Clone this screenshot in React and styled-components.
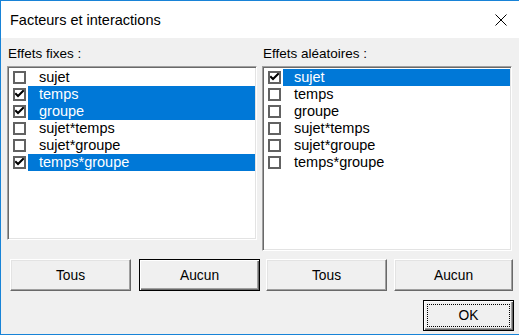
import React from "react";
import styled, { createGlobalStyle } from "styled-components";

const Global = createGlobalStyle`
  html, body { margin: 0; padding: 0; background: #f0f0f0; }
  * { box-sizing: border-box; }
`;

const Window = styled.div`
  width: 519px;
  height: 335px;
  background: #f0f0f0;
  border-top: 1px solid #1883d7;
  border-left: 1px solid #1883d7;
  border-bottom: 1px solid #1883d7;
  display: flex;
  flex-direction: column;
  font-family: "Liberation Sans", Arial, sans-serif;
  color: #000;
`;

const TitleBar = styled.div`
  height: 37px;
  background: #fff;
  display: flex;
  align-items: center;
  justify-content: space-between;
  padding: 0 12px 0 9px;
  flex-shrink: 0;
`;

const Title = styled.div`
  font-size: 14.5px;
  margin-top: 1px;
`;

const Close = styled.svg`
  width: 12px;
  height: 12px;
  display: block;
  margin-top: 1px;
`;

const Body = styled.div`
  display: flex;
  flex-direction: column;
  padding: 8px 0 0 6px;
`;

const Columns = styled.div`
  display: grid;
  grid-template-columns: 250px 250px;
  column-gap: 5px;
  align-items: start;
  height: 213px;
`;

const Column = styled.div`
  display: flex;
  flex-direction: column;
`;

const Label = styled.div`
  font-size: 13.5px;
  height: 20px;
  line-height: 16px;
  padding-left: 1px;
`;

const ListBox = styled.div`
  height: ${(p) => p.$h}px;
  background: #fff;
  border-style: solid;
  border-width: 1px;
  border-color: #a0a0a0 #fff #fff #a0a0a0;
  box-shadow: inset 1px 1px 0 #696969, inset -1px -1px 0 #e3e3e3;
  padding: 2px 1px 1px 2px;
  display: flex;
  flex-direction: column;
`;

const Row = styled.div`
  height: 17px;
  display: flex;
  align-items: stretch;
`;

const CheckCell = styled.div`
  width: 18px;
  flex-shrink: 0;
  display: flex;
  align-items: center;
  padding-left: 3px;
`;

const Box = styled.div`
  width: 13px;
  height: 13px;
  border: 2px solid #626262;
  background: #fff;
  display: flex;
  align-items: center;
  justify-content: center;
`;

const ItemText = styled.div`
  flex: 1;
  font-size: 14.5px;
  line-height: 17px;
  padding-left: 11px;
  background: ${(p) => (p.$sel ? "#0078d7" : "transparent")};
  color: ${(p) => (p.$sel ? "#fff" : "#000")};
  white-space: nowrap;
`;

const ButtonRow = styled.div`
  display: flex;
  padding-left: 3px;
  margin-top: 0px;
`;

const Button = styled.div`
  width: ${(p) => p.$w}px;
  height: 32px;
  margin-left: ${(p) => p.$ml}px;
  display: flex;
  align-items: center;
  justify-content: center;
  font-size: 13.8px;
  background: #f0f0f0;
  border: 1px solid;
  border-color: ${(p) => (p.$def ? "#000" : "#fff #696969 #696969 #fff")};
  box-shadow: ${(p) =>
    p.$def
      ? "inset 1px 1px 0 #fff, inset -1px -1px 0 #696969, inset -2px -2px 0 #a0a0a0"
      : "inset -1px -1px 0 #a0a0a0, inset 1px 1px 0 #e3e3e3"};
  position: relative;
`;

const Focus = styled.div`
  position: absolute;
  inset: 3px;
  border: 1px dotted #000;
  display: flex;
  align-items: center;
  justify-content: center;
`;

const Footer = styled.div`
  display: flex;
  justify-content: flex-end;
  padding-right: 5px;
  margin-top: 9px;
`;

const OkButton = styled(Button)`
  height: 31px;
`;

const Check = () => (
  <svg width="9" height="9" viewBox="0 0 9 9">
    <path d="M1 4 L3 6 L8 1" stroke="#000" strokeWidth="2" fill="none" strokeLinecap="square" />
  </svg>
);

const items = ["sujet", "temps", "groupe", "sujet*temps", "sujet*groupe", "temps*groupe"];

function List({ checked, h }) {
  return (
    <ListBox $h={h}>
      {items.map((it) => (
        <Row key={it}>
          <CheckCell>
            <Box>{checked.includes(it) && <Check />}</Box>
          </CheckCell>
          <ItemText $sel={checked.includes(it)}>{it}</ItemText>
        </Row>
      ))}
    </ListBox>
  );
}

export default function App() {
  return (
    <>
      <Global />
      <Window>
        <TitleBar>
          <Title>Facteurs et interactions</Title>
          <Close viewBox="0 0 12 12">
            <path d="M0.5 0.5 L11.5 11.5 M11.5 0.5 L0.5 11.5" stroke="#000" strokeWidth="1" />
          </Close>
        </TitleBar>
        <Body>
          <Columns>
            <Column>
              <Label>Effets fixes :</Label>
              <List h={174} checked={["temps", "groupe", "temps*groupe"]} />
            </Column>
            <Column>
              <Label>Effets aléatoires :</Label>
              <List h={185} checked={["sujet"]} />
            </Column>
          </Columns>
          <ButtonRow>
            <Button $w={121} $ml={0}>Tous</Button>
            <Button $w={121} $ml={8} $def>Aucun</Button>
            <Button $w={121} $ml={6}>Tous</Button>
            <Button $w={119} $ml={7}>Aucun</Button>
          </ButtonRow>
          <Footer>
            <OkButton as="div" $w={91} $ml={0} $def>
              <Focus>OK</Focus>
            </OkButton>
          </Footer>
        </Body>
      </Window>
    </>
  );
}
